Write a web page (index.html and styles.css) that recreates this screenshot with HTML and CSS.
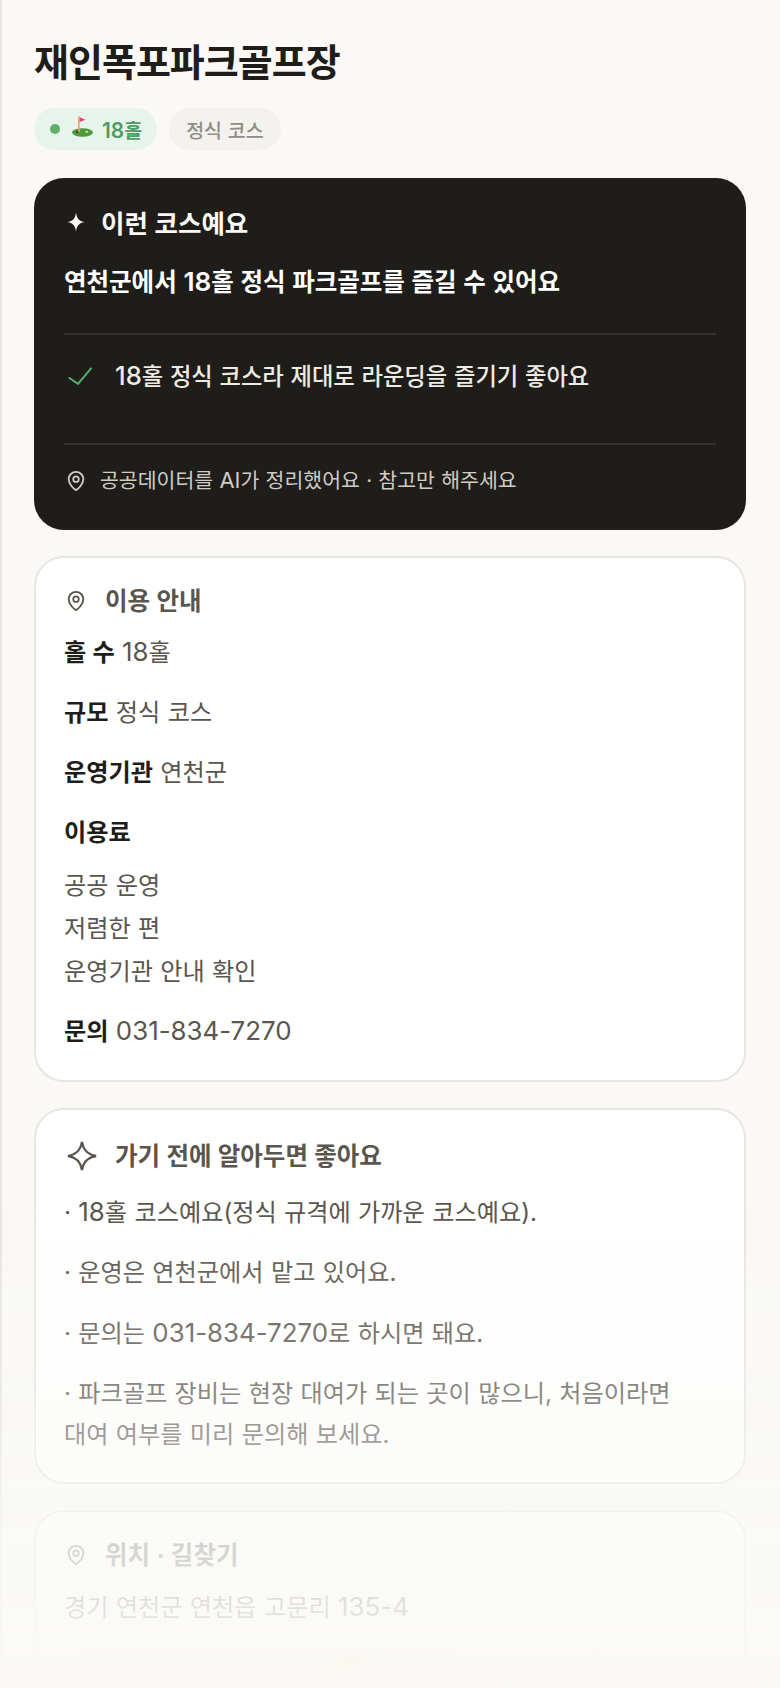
FILE: index.html
```html
<!DOCTYPE html>
<html lang="ko">
<head>
<meta charset="utf-8">
<title>재인폭포파크골프장</title>
<link rel="stylesheet" href="styles.css">
</head>
<body>
<main class="page">
  <h1 class="title">재인폭포파크골프장</h1>
  <div class="badges">
    <span class="badge badge-green">
      <span class="dot"></span>
      <svg class="flag" viewBox="0 0 23 26" role="img" aria-label="깃발">
        <ellipse cx="11.500" cy="16.500" rx="10.500" ry="4.200" fill="#4f9a3a"/>
        <rect x="4.800" y="14.900" width="3" height="1.800" fill="#3a3340"/>
        <rect x="14.500" y="14.900" width="2.500" height="1.800" fill="#cfd8c8"/>
        <rect x="7" y=".3" width="1.700" height="15.700" fill="#eda36a"/>
        <path d="M8.700 1.300 14.500 3.700 8.700 6z" fill="#ef3f74"/>
      </svg>
      <span><span class="num">18</span>홀</span>
    </span>
    <span class="badge badge-gray">정식 코스</span>
  </div>
  <section class="hero">
    <h2 class="hero-head">
      <svg class="hero-star" viewBox="0 0 24 24"><path d="M12 1.500c.8 6.400 3.200 9.500 9.500 10.500-6.300 1-8.700 4.100-9.500 10.500-.8-6.400-3.200-9.500-9.500-10.500 6.300-1 8.700-4.100 9.500-10.500z"/></svg>
      이런 코스예요
    </h2>
    <p class="hero-lead">연천군에서 <span class="num">18</span>홀 정식 파크골프를 즐길 수 있어요</p>
    <div class="hero-check">
      <svg class="check" viewBox="0 0 24 18"><path d="M.7 10.500 10 16.800 23.500 .8"/></svg>
      <span><span class="num">18</span>홀 정식 코스라 제대로 라운딩을 즐기기 좋아요</span>
    </div>
    <p class="hero-note">
      <svg class="pin" viewBox="0 0 24 24"><path d="M20 10c0 5.500-6 11-8 12-2-1-8-6.500-8-12a8 8 0 0 1 16 0z"/><circle cx="12" cy="10" r="3"/></svg>
      <span>공공데이터를 <span class="num">AI</span>가 정리했어요 · 참고만 해주세요</span>
    </p>
  </section>
  <section class="card">
    <h2 class="card-head">
      <svg class="pin" viewBox="0 0 24 24"><path d="M20 10c0 5.500-6 11-8 12-2-1-8-6.500-8-12a8 8 0 0 1 16 0z"/><circle cx="12" cy="10" r="3"/></svg>
      이용 안내
    </h2>
    <p class="row"><b>홀 수</b> <span class="num">18</span>홀</p>
    <p class="row"><b>규모</b> 정식 코스</p>
    <p class="row"><b>운영기관</b> 연천군</p>
    <p class="row"><b>이용료</b></p>
    <p class="fee">공공 운영<br>저렴한 편<br>운영기관 안내 확인</p>
    <p class="row"><b>문의</b> <span class="num">031-834-7270</span></p>
  </section>
  <section class="card card-tips">
    <h2 class="card-head card-head-wide">
      <svg class="spark" viewBox="0 0 32 32"><path d="M16 2c1.500 8.500 5.500 12.500 14 14-8.500 1.500-12.500 5.500-14 14-1.500-8.500-5.500-12.500-14-14 8.500-1.500 12.500-5.500 14-14z"/></svg>
      가기 전에 알아두면 좋아요
    </h2>
    <p class="tip">· <span class="num">18</span>홀 코스예요(정식 규격에 가까운 코스예요).</p>
    <p class="tip">· 운영은 연천군에서 맡고 있어요.</p>
    <p class="tip">· 문의는 <span class="num">031-834-7270</span>로 하시면 돼요.</p>
    <p class="tip">· 파크골프 장비는 현장 대여가 되는 곳이 많으니, 처음이라면 대여 여부를 미리 문의해 보세요.</p>
  </section>
  <section class="card card-map">
    <h2 class="card-head">
      <svg class="pin" viewBox="0 0 24 24"><path d="M20 10c0 5.500-6 11-8 12-2-1-8-6.500-8-12a8 8 0 0 1 16 0z"/><circle cx="12" cy="10" r="3"/></svg>
      위치 · 길찾기
    </h2>
    <p class="row">경기 연천군 연천읍 고문리 <span class="num">135-4</span></p>
    <div class="map">
      <svg class="map-art" viewBox="0 0 652 200" preserveAspectRatio="none">
        <rect class="tile" x="0" y="0" width="392" height="200"/>
        <path class="road" d="M289 0H316L262 22H238z"/>
        <path class="street" d="M507 30 530 0M518 30 541 0M529 30 552 0M520 0 548 30M534 0 557 28"/>
      </svg>
    </div>
  </section>
</main>
<div class="fade"></div>
</body>
</html>
```
FILE: styles.css
```css
* { box-sizing: border-box; }
html, body { margin: 0; height: 1688px; overflow: hidden; }
body {
  background: #faf9f6;
  font-family: Inter, "Noto Sans CJK KR", sans-serif;
  color: #1f1d1a;
  border-left: 2px solid #e8e6e0;
  word-spacing: .5px;
  word-break: keep-all;
}
.page { padding: 36px 34px 0 32px; }
.num { font-size: 1.07em; }
.title { margin: 0; font-size: 38px; line-height: 52px; font-weight: 700; letter-spacing: -1px; }
.badges { display: flex; gap: 12px; margin-top: 20px; }
.badge { display: inline-flex; align-items: center; height: 42px; border-radius: 21px; padding: 0 17px; font-size: 19.500px; font-weight: 500; }
.badge-green { background: #e8f3ec; color: #4f9c62; font-weight: 600; gap: 8px; padding: 0 15px 0 16px; }
.badge-gray { background: #f3f2ee; color: #918d85; }
.dot { width: 10px; height: 10px; border-radius: 50%; background: #5cb06c; margin-right: 3px; }
.flag { width: 23px; height: 26px; flex: none; }
.hero { margin-top: 28px; background: #1f1d1a; border-radius: 30px; padding: 27px 30px 0; height: 352px; color: #fff; }
.hero-head { margin: 0; display: flex; align-items: center; gap: 14px; font-size: 25.500px; line-height: 38px; font-weight: 700; color: #faf9f6; }
.hero-star { width: 22px; height: 22px; fill: #faf9f6; margin: 0 0 4px 1px; flex: none; }
.hero-lead { margin: 21px 0 0; font-size: 24.500px; line-height: 36px; font-weight: 600; padding-bottom: 33px; border-bottom: 2px solid #35332f; }
.hero-check { display: flex; align-items: center; gap: 23px; padding: 22px 0 47px; border-bottom: 2px solid #35332f; font-size: 23.300px; line-height: 38px; font-weight: 500; color: #eeebe4; }
.hero-check .num { font-size: 1.100em; }
.check { width: 24px; height: 18px; margin: 0 0 2px 4px; fill: none; stroke: #5cb06c; stroke-width: 2; flex: none; }
.hero-note { margin: 20px 0 0; display: flex; align-items: center; gap: 13px; font-size: 20.500px; line-height: 30px; color: #cfccc4; }
.pin { width: 22px; height: 22px; margin-left: 1px; fill: none; stroke: currentColor; stroke-width: 2; flex: none; }
.card { margin-top: 26px; background: #fff; border: 2px solid #e8e6e0; border-radius: 30px; padding: 25px 30px 28px 28px; }
.card-head { margin: 0; display: flex; align-items: center; gap: 18px; font-size: 24.500px; line-height: 36px; font-weight: 700; color: #5a554d; }
.spark { width: 32px; height: 32px; margin-left: 2px; fill: none; stroke: currentColor; stroke-width: 2.400; flex: none; }
.card-head-wide { gap: 17px; padding-top: 4px; }
.row { margin: 13px 0 0; font-size: 24.200px; line-height: 40px; color: #5a554d; }
.row b { font-weight: 700; color: #1f1d1a; }
.row + .row { margin-top: 20px; }
.fee { margin: 11px 0 0; font-size: 24.200px; line-height: 43px; color: #5a554d; }
.fee + .row { margin-top: 18px; }
.card-tips { padding-bottom: 27px; }
.card-tips .card-head { margin-top: -1px; }
.tip { margin: 17px 0 0; font-size: 24.200px; line-height: 41px; color: #5a554d; }
.tip + .tip { margin-top: 19px; }
.card-map .row { margin-top: 14px; }
.map { margin-top: 27px; height: 200px; border-radius: 24px; background: #fbfaf7; overflow: hidden; }
.map-art { display: block; width: 100%; height: 100%; fill: none; }
.tile { fill: #eceae2; }
.road { fill: #f8e4a8; }
.street { stroke: #dcd9cf; stroke-width: 1; }
.fade { position: fixed; left: 0; right: 0; bottom: 0; height: 480px; background: linear-gradient(to bottom, rgba(250,249,246,0) 0%, rgba(250,249,246,.3) 38%, rgba(250,249,246,.42) 46%, rgba(250,249,246,.78) 71%, rgba(250,249,246,.96) 100%); }
```
